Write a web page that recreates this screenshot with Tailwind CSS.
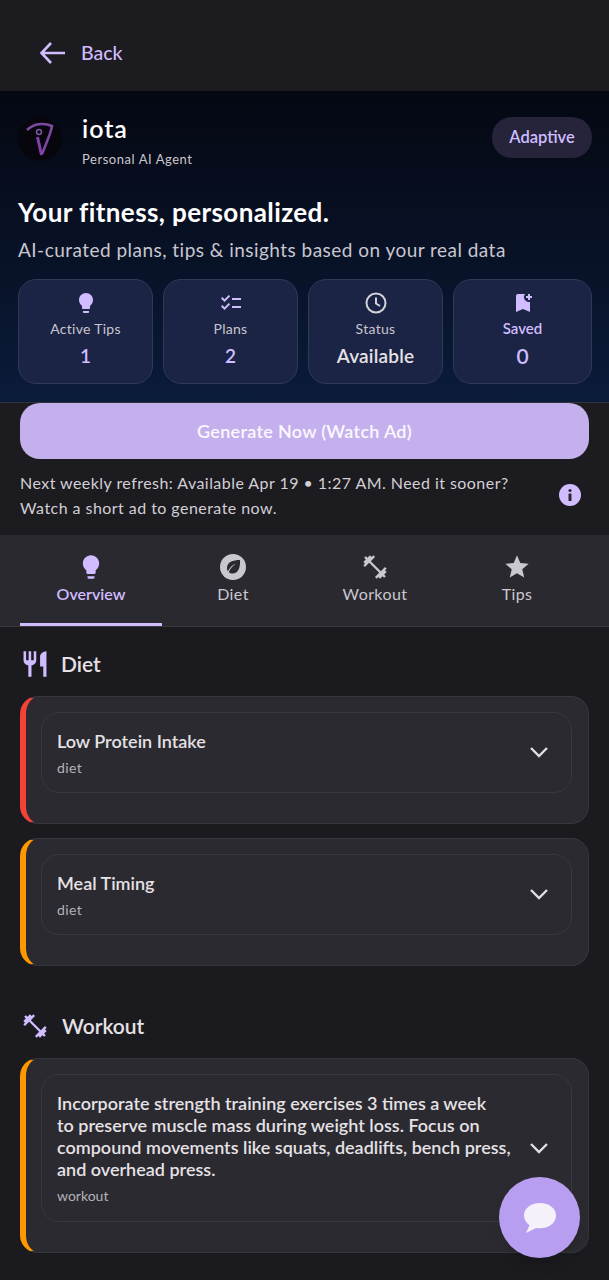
<!DOCTYPE html>
<html>
    <head>
        <title>iota</title>
        <script src="https://cdn.jsdelivr.net/npm/@tailwindcss/browser@4"></script>
    </head>

    <body class="bg-[#1b1a1f] font-['Lato',sans-serif]">
        <div class="relative w-[609px] h-[1280px] overflow-hidden flex flex-col">
            <!-- Back bar -->
            <div class="h-[91px] shrink-0 flex items-center pl-[38px] pt-[14px] gap-[15px] bg-[#1c1b1f]">
                <svg class="w-[28px] h-[28px] text-[#d0bcff]" viewBox="0 0 28 28" fill="none" stroke="currentColor" stroke-width="2.6"><path d="M27 14H4M13 4L3.5 14l9.500 10"/></svg>
                <span class="text-[19.5px] font-medium text-[#d0bcff]">Back</span>
            </div>

            <!-- Hero -->
            <div class="h-[312px] shrink-0 bg-gradient-to-b from-[#050812] to-[#0b1b3a] border-b border-[#33323a] pl-[18px] pr-[17px] pt-[26px]">
                <div class="flex items-start justify-between">
                    <div class="flex gap-[20px]">
                        <div class="w-[44px] h-[44px] rounded-full bg-[#07060d] flex items-center justify-center">
                            <svg class="w-[30px] h-[40px]" viewBox="0 0 30 40" fill="none">
                                <path d="M2 11C8 5 18 3 27 7 26 14 21 25 17 35" stroke="#7d4aa3" stroke-width="2.500"/>
                                <path d="M12.500 18L16.500 36" stroke="#8240ad" stroke-width="3"/>
                                <circle cx="14" cy="13" r="2.500" stroke="#7a5a9c" stroke-width="1.500"/>
                            </svg>
                        </div>
                        <div class="-mt-[1px]">
                            <p class="text-[25px] leading-[24px] font-semibold text-white tracking-[1px]">iota</p>
                            <p class="mt-[10px] text-[13px] leading-[18px] text-[#cac7cf] tracking-[0.55px]">Personal AI Agent</p>
                        </div>
                    </div>
                    <div class="w-[100px] h-[41px] rounded-[20px] bg-[#25243b] flex items-center justify-center text-[16.5px] font-semibold text-[#d0bcff]">Adaptive</div>
                </div>

                <h1 class="mt-[28px] text-[26px] leading-[32px] font-bold text-white tracking-[0.4px]">Your fitness, personalized.</h1>
                <p class="mt-[10px] text-[19px] leading-[24px] text-[#c9c6d0] tracking-[0.47px] whitespace-nowrap">AI-curated plans, tips &amp; insights based on your real data</p>

                <div class="mt-[17px] flex gap-[10px]">
                    <div class="w-[135px] h-[105px] rounded-[18px] bg-[#1b2444] border border-[#2f3a56] flex flex-col items-center pt-[11px]">
                        <svg class="w-[24px] h-[24px] text-[#d0bcff]" viewBox="0 0 24 24" fill="currentColor"><path d="M9 21c0 .55.45 1 1 1h4c.55 0 1-.45 1-1v-1H9v1zm3-19C8.140 2 5 5.140 5 9c0 2.380 1.190 4.470 3 5.740V17c0 .55.45 1 1 1h6c.55 0 1-.45 1-1v-2.260c1.810-1.270 3-3.360 3-5.740 0-3.860-3.140-7-7-7z"/></svg>
                        <p class="mt-[5px] text-[14px] leading-[18px] text-[#c9c6d0] tracking-[0.3px]">Active Tips</p>
                        <p class="mt-[6px] text-[19px] leading-[24px] font-semibold text-[#d0bcff]">1</p>
                    </div>
                    <div class="w-[135px] h-[105px] rounded-[18px] bg-[#1b2444] border border-[#2f3a56] flex flex-col items-center pt-[11px]">
                        <svg class="w-[24px] h-[24px] text-[#d0bcff]" viewBox="0 0 24 24" fill="currentColor"><path d="M22 7h-9v2h9V7zm0 8h-9v2h9v-2zM5.540 11L2 7.460l1.410-1.410 2.120 2.120 4.240-4.240 1.410 1.410L5.540 11zm0 8L2 15.460l1.410-1.410 2.120 2.120 4.240-4.240 1.410 1.410L5.540 19z"/></svg>
                        <p class="mt-[5px] text-[14px] leading-[18px] text-[#c9c6d0] tracking-[0.3px]">Plans</p>
                        <p class="mt-[6px] text-[19px] leading-[24px] font-semibold text-[#d0bcff]">2</p>
                    </div>
                    <div class="w-[135px] h-[105px] rounded-[18px] bg-[#1b2444] border border-[#2f3a56] flex flex-col items-center pt-[11px]">
                        <svg class="w-[24px] h-[24px] text-[#d4d2da]" viewBox="0 0 24 24" fill="none" stroke="currentColor" stroke-width="2"><circle cx="12" cy="12" r="9.500"/><path d="M12 6.500V12.500l4 2.500"/></svg>
                        <p class="mt-[5px] text-[14px] leading-[18px] text-[#c9c6d0] tracking-[0.3px]">Status</p>
                        <p class="mt-[6px] text-[19px] leading-[24px] font-semibold text-[#e6e1e5] tracking-[0.2px]">Available</p>
                    </div>
                    <div class="w-[139px] h-[105px] rounded-[18px] bg-[#1b2444] border border-[#2f3a56] flex flex-col items-center pt-[11px]">
                        <svg class="w-[24px] h-[24px] text-[#d0bcff]" viewBox="0 0 24 24" fill="currentColor"><path d="M21 7h-2v2h-2V7h-2V5h2V3h2v2h2v2zm-2 14l-7-3-7 3V5c0-1.100.9-2 2-2h7a5.002 5.002 0 0 0 5 7.900V21z"/></svg>
                        <p class="mt-[4px] text-[15px] leading-[18px] font-semibold text-[#d0bcff]">Saved</p>
                        <p class="mt-[7px] text-[21px] leading-[24px] font-semibold text-[#d0bcff]">0</p>
                    </div>
                </div>
            </div>

            <!-- Generate -->
            <div class="h-[132px] shrink-0 px-[20px] bg-[#1c1b1f]">
                <button class="w-[569px] h-[56px] rounded-[20px] bg-[#c4b0ec] text-[18px] font-semibold text-[#fbf8ff] tracking-[0.3px]">Generate Now (Watch Ad)</button>
                <div class="mt-[11px] flex items-center justify-between pr-[8px]">
                    <p class="text-[16px] leading-[25px] text-[#d2cfd6] tracking-[0.45px]">Next weekly refresh: Available Apr 19 • 1:27 AM. Need it sooner?<br>Watch a short ad to generate now.</p>
                    <svg class="w-[22px] h-[22px] shrink-0" viewBox="0 0 22 22"><circle cx="11" cy="11" r="11" fill="#d0bcff"/><rect x="9.500" y="9.500" width="3" height="7.500" rx="0.500" fill="#2b2930"/><circle cx="11" cy="6.500" r="1.600" fill="#2b2930"/></svg>
                </div>
            </div>

            <!-- Tabs -->
            <div class="h-[92px] shrink-0 bg-[#2b2930] border-b border-[#3a383f] px-[20px] flex">
                <div class="w-[142px] flex flex-col items-center pt-[18px] border-b-[3px] border-[#d0bcff] h-[91px]">
                    <svg class="w-[28px] h-[28px] text-[#d0bcff]" viewBox="0 0 24 24" fill="currentColor"><path d="M9 21c0 .55.45 1 1 1h4c.55 0 1-.45 1-1v-1H9v1zm3-19C8.140 2 5 5.140 5 9c0 2.380 1.190 4.470 3 5.740V17c0 .55.45 1 1 1h6c.55 0 1-.45 1-1v-2.260c1.810-1.270 3-3.360 3-5.740 0-3.860-3.140-7-7-7z"/></svg>
                    <span class="mt-[2px] text-[16px] leading-[22px] font-semibold text-[#d0bcff]">Overview</span>
                </div>
                <div class="w-[142px] flex flex-col items-center pt-[18px]">
                    <svg class="w-[28px] h-[28px]" viewBox="0 0 28 28"><circle cx="14" cy="14" r="13" fill="#cac7cf"/><path d="M21 7c-7 0-13 2-13 8 0 1.500.5 2.500 1 3.300C10.500 14.500 13.500 12 17 10.500 13.500 13 11 15.500 9.800 19.200c1 .8 2.200 1.300 3.700 1.300C19.500 20.500 21.500 14 21 7z" fill="#2b2930"/></svg>
                    <span class="mt-[2px] text-[16px] leading-[22px] text-[#cac7cf] tracking-[0.4px]">Diet</span>
                </div>
                <div class="w-[142px] flex flex-col items-center pt-[18px]">
                    <svg class="w-[28px] h-[28px] text-[#cac7cf]" viewBox="0 0 24 24" fill="currentColor"><path d="M20.570 14.860L22 13.430 20.570 12 17 15.570 8.430 7 12 3.430 10.570 2 9.140 3.430 7.710 2 5.570 4.140 4.140 2.710 2.710 4.140l1.430 1.430L2 7.710l1.430 1.430L2 10.570 3.430 12 7 8.430 15.570 17 12 20.570 13.430 22l1.430-1.430L16.290 22l2.140-2.140 1.430 1.430 1.430-1.430-1.430-1.430L22 16.290z"/></svg>
                    <span class="mt-[2px] text-[16px] leading-[22px] text-[#cac7cf] tracking-[0.4px]">Workout</span>
                </div>
                <div class="w-[142px] flex flex-col items-center pt-[18px]">
                    <svg class="w-[28px] h-[28px] text-[#cac7cf]" viewBox="0 0 24 24" fill="currentColor"><path d="M12 17.270L18.180 21l-1.640-7.030L22 9.240l-7.190-.61L12 2 9.190 8.630 2 9.240l5.460 4.730L5.820 21z"/></svg>
                    <span class="mt-[2px] text-[16px] leading-[22px] text-[#cac7cf] tracking-[0.4px]">Tips</span>
                </div>
            </div>

            <!-- Content -->
            <div class="flex-1 bg-[#1b1a1f] px-[20px] pt-[22px]">
                <div class="flex items-center h-[30px] gap-[12px] pl-[1px]">
                    <svg class="w-[28px] h-[28px] text-[#d0bcff]" viewBox="2 1 20 22" fill="currentColor"><path d="M11 9H9V2H7v7H5V2H3v7c0 2.120 1.660 3.840 3.750 3.970V22h2.500v-9.030C11.340 12.840 13 11.120 13 9V2h-2v7zm5-3v8h2.500v8H21V2c-2.760 0-5 2.240-5 4z"/></svg>
                    <h2 class="text-[21px] font-semibold text-[#e6e1e5]">Diet</h2>
                </div>

                <div class="mt-[17px] h-[128px] rounded-[18px] bg-[#2a2a30] border border-[#36363c] border-l-[6px] border-l-[#f44336] pt-[15px] pl-[15px] pr-[16px]">
                    <div class="h-[81px] rounded-[18px] border border-[#38383e] pl-[15px] pr-[22px] flex items-center justify-between">
                        <div class="pt-[1px]">
                            <p class="text-[18px] leading-[24px] font-semibold text-[#e6e1e5]">Low Protein Intake</p>
                            <p class="mt-[5px] text-[14px] leading-[20px] text-[#b5b2b8] tracking-[0.4px]">diet</p>
                        </div>
                        <svg class="w-[20px] h-[14px] mb-[2px] text-[#e0dde3]" viewBox="0 0 20 14" fill="none" stroke="currentColor" stroke-width="2.400"><path d="M2 3l8 8 8-8"/></svg>
                    </div>
                </div>

                <div class="mt-[14px] h-[128px] rounded-[18px] bg-[#2a2a30] border border-[#36363c] border-l-[6px] border-l-[#ff9800] pt-[15px] pl-[15px] pr-[16px]">
                    <div class="h-[81px] rounded-[18px] border border-[#38383e] pl-[15px] pr-[22px] flex items-center justify-between">
                        <div class="pt-[1px]">
                            <p class="text-[18px] leading-[24px] font-semibold text-[#e6e1e5]">Meal Timing</p>
                            <p class="mt-[5px] text-[14px] leading-[20px] text-[#b5b2b8] tracking-[0.4px]">diet</p>
                        </div>
                        <svg class="w-[20px] h-[14px] mb-[2px] text-[#e0dde3]" viewBox="0 0 20 14" fill="none" stroke="currentColor" stroke-width="2.400"><path d="M2 3l8 8 8-8"/></svg>
                    </div>
                </div>

                <div class="mt-[45px] flex items-center h-[30px] gap-[13px] pl-[1px]">
                    <svg class="w-[28px] h-[28px] text-[#d0bcff]" viewBox="0 0 24 24" fill="currentColor"><path d="M20.570 14.860L22 13.430 20.570 12 17 15.570 8.430 7 12 3.430 10.570 2 9.140 3.430 7.710 2 5.570 4.140 4.140 2.710 2.710 4.140l1.430 1.430L2 7.710l1.430 1.430L2 10.570 3.430 12 7 8.430 15.570 17 12 20.570 13.430 22l1.430-1.430L16.290 22l2.140-2.140 1.430 1.430 1.430-1.430-1.430-1.430L22 16.290z"/></svg>
                    <h2 class="text-[21px] font-semibold text-[#e6e1e5]">Workout</h2>
                </div>

                <div class="mt-[17px] h-[195px] rounded-[18px] bg-[#2a2a30] border border-[#36363c] border-l-[6px] border-l-[#ff9800] pt-[15px] pl-[15px] pr-[16px]">
                    <div class="h-[148px] rounded-[18px] border border-[#38383e] pl-[15px] pr-[22px] flex items-center justify-between">
                        <div class="pt-[1px]">
                            <p class="text-[18px] leading-[22px] font-semibold text-[#e6e1e5]">Incorporate strength training exercises 3 times a week<br>to preserve muscle mass during weight loss. Focus on<br>compound movements like squats, deadlifts, bench press,<br>and overhead press.</p>
                            <p class="mt-[6px] text-[14px] leading-[20px] text-[#b5b2b8]">workout</p>
                        </div>
                        <svg class="w-[20px] h-[14px] shrink-0 text-[#e0dde3]" viewBox="0 0 20 14" fill="none" stroke="currentColor" stroke-width="2.400"><path d="M2 3l8 8 8-8"/></svg>
                    </div>
                </div>
            </div>

            <!-- Chat button -->
            <div class="absolute left-[499px] top-[1177px] w-[81px] h-[81px] rounded-full bg-[#b89ef0] shadow-lg flex items-center justify-center">
                <svg class="w-[36px] h-[34px]" viewBox="0 0 36 34" fill="#f5f1fb"><path d="M18 2C8.500 2 2 7.500 2 14.500c0 4 2.200 7.500 5.500 9.800L4 32l10-5c1.300.2 2.700.3 4 .3 9.500 0 16-5.700 16-12.800C34 7.500 27.500 2 18 2z"/></svg>
            </div>
        </div>
    </body>
</html>
